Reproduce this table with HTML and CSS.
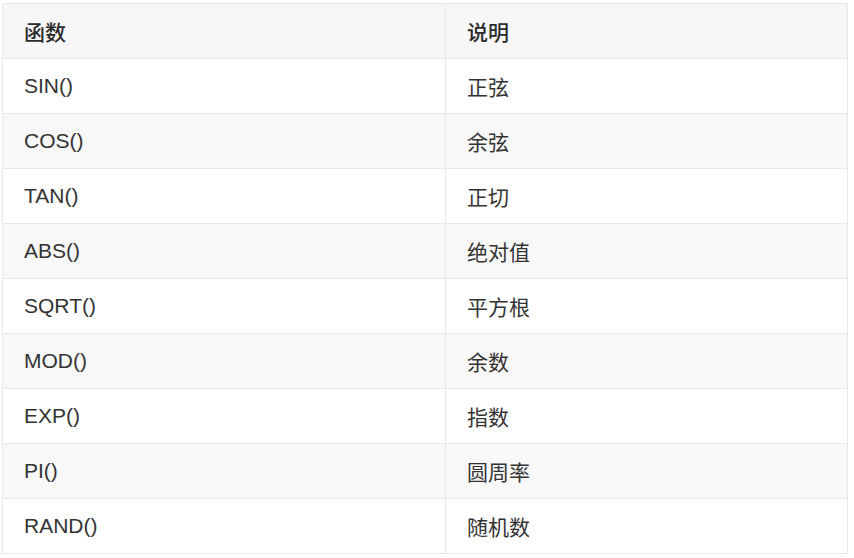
FILE: index.html
```html
<!DOCTYPE html>
<html lang="zh">
<head>
<meta charset="utf-8">
<link rel="stylesheet" href="styles.css">
</head>
<body>
<table class="fn-table">
  <thead>
    <tr><th>函数</th><th>说明</th></tr>
  </thead>
  <tbody>
    <tr><td>SIN()</td><td>正弦</td></tr>
    <tr><td>COS()</td><td>余弦</td></tr>
    <tr><td>TAN()</td><td>正切</td></tr>
    <tr><td>ABS()</td><td>绝对值</td></tr>
    <tr><td>SQRT()</td><td>平方根</td></tr>
    <tr><td>MOD()</td><td>余数</td></tr>
    <tr><td>EXP()</td><td>指数</td></tr>
    <tr><td>PI()</td><td>圆周率</td></tr>
    <tr><td>RAND()</td><td>随机数</td></tr>
  </tbody>
</table>
</body>
</html>
```
FILE: styles.css
```css
html, body {
  margin: 0;
  padding: 0;
  background: #ffffff;
}
body {
  padding: 3px 0 0 2px;
  font-family: "Liberation Sans", "Noto Sans CJK SC", sans-serif;
  color: #333333;
}
.fn-table {
  border-collapse: collapse;
  width: 846px;
  font-size: 21px;
}
.fn-table th,
.fn-table td {
  border: 1px solid #e8e8e8;
  height: 55px;
  padding: 0 21px;
  text-align: left;
  vertical-align: middle;
  box-sizing: border-box;
}
.fn-table th {
  font-weight: 500;
  color: #2b2b2b;
  background: #f7f7f7;
}
.fn-table th:first-child,
.fn-table td:first-child {
  width: 443px;
}
.fn-table tbody tr:nth-child(even) {
  background: #f8f8f8;
}
```
